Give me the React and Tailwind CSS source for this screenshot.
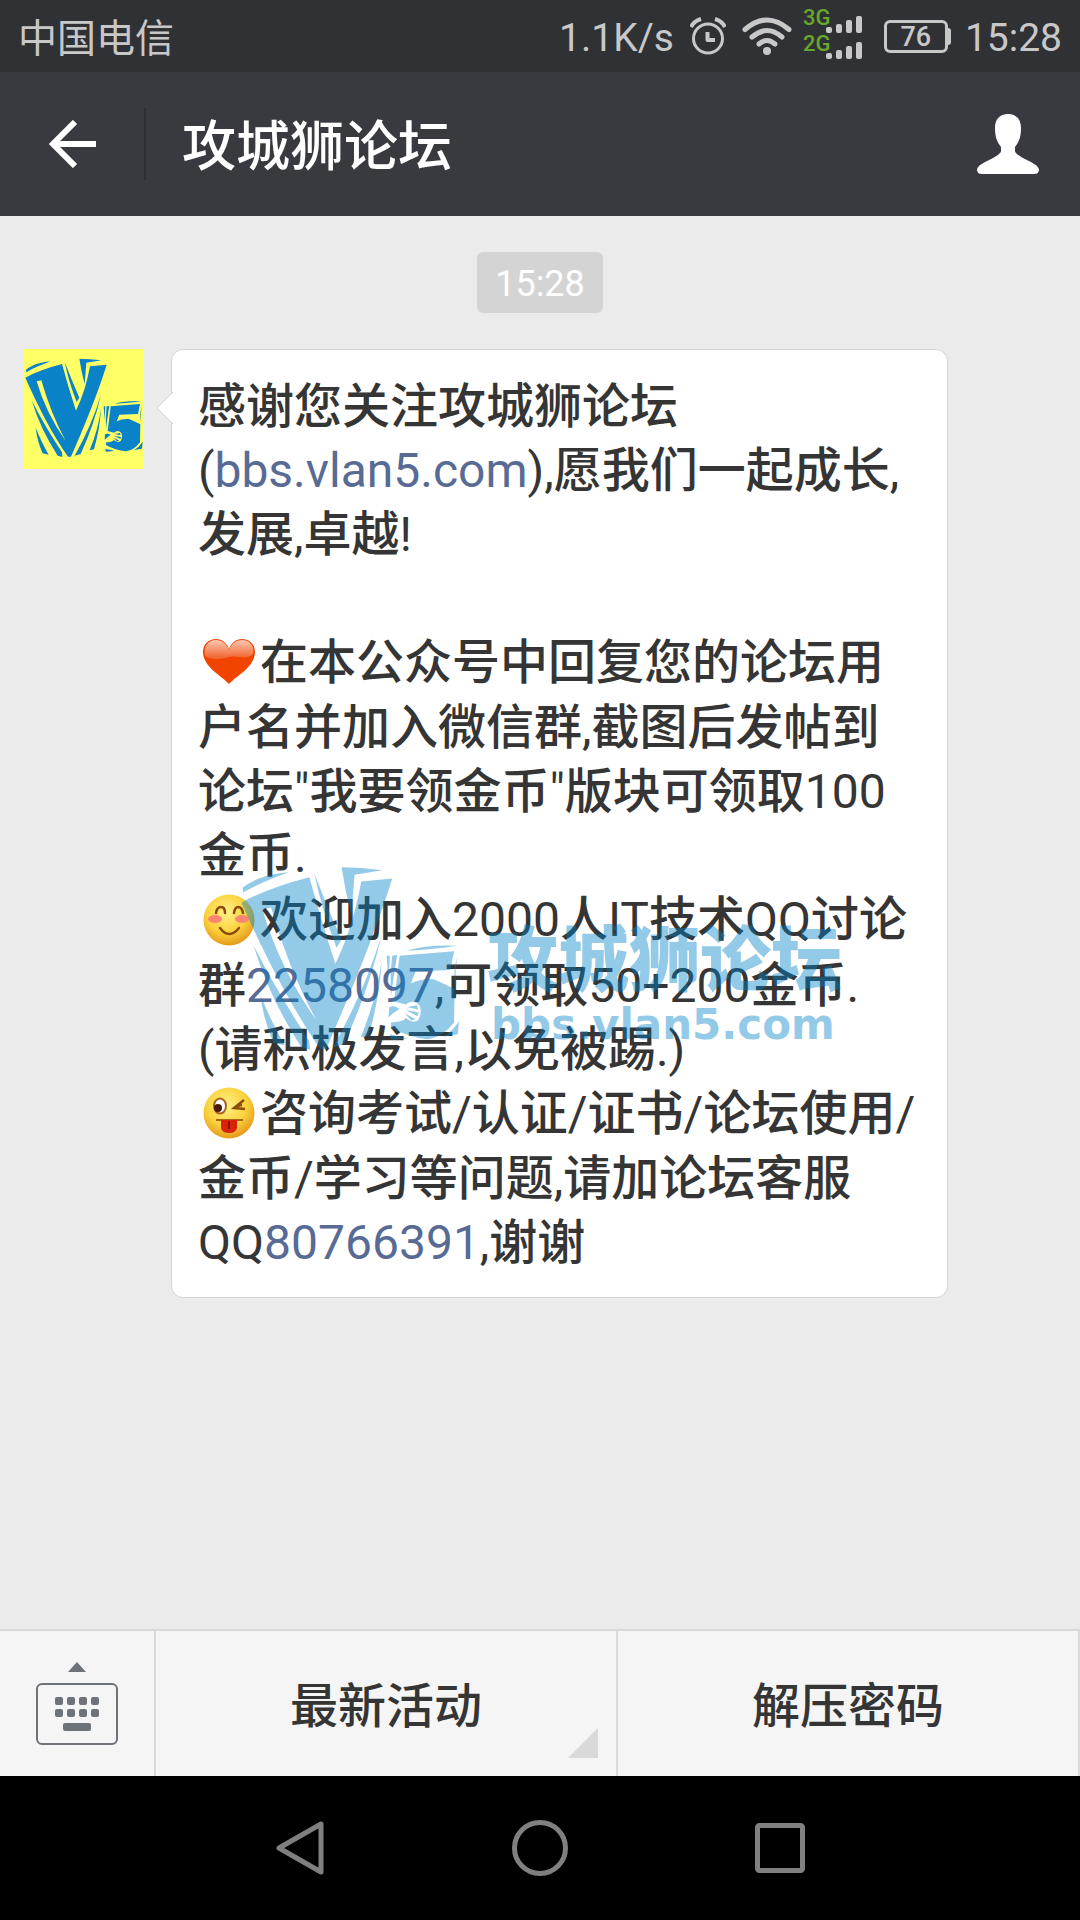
import React from 'react';

// The V5 mark, shared by the avatar and the watermark
const LogoShapes = () => (
    <g>
        <path d="M18 74 C40 58 62 52 92 49 C66 59 42 68 19 82 Z" />
        <path
            fillRule="evenodd"
            d="M16 98 Q60 74 126 57 Q146 130 168 197 Q196 140 210 64 L260 59 C232 150 190 250 153 335 L144 335 C98 270 52 180 16 98 Z M50 109 L64 106 Q92 205 137 288 Q78 205 50 109 Z"
        />
        <path d="M134 51 Q156 108 178 158 L170 171 Q146 110 134 51 Z" />
        <path d="M178 41 Q210 41 244 46 L199 53 L194 118 Q184 80 178 41 Z" />
        <path d="M36 168 Q72 240 126 322 L127 336 L113 332 Q60 250 36 168 Z" />
        <path d="M47 248 Q62 286 86 329 L68 325 Q52 290 47 248 Z" />
        <path d="M243 150 Q222 240 182 327 L164 332 Q214 244 243 150 Z" />
        <path d="M243 190 Q240 250 222 313 L209 316 Q236 250 243 190 Z" />
        <path d="M282 176 Q318 166 364 168 Q330 174 282 176 Z" />
        <path d="M251 184 L256 184 L254 226 Z M260 184 L268 183 Q262 220 258 250 Q256 220 260 184 Z" />
        <path
            d="M272 184 L360 177 Q357 192 354 207 L298 209 L290 229 Q308 220 327 222 Q346 230 361 238 L360 292 Q342 316 318 319 Q286 316 258 300 L258 292 Q276 292 282 285 Q294 295 302 288 Q309 276 304 264 Q294 253 282 263 L263 258 Z"
        />
        <path d="M284 267 L300 264 L302 271 Z M282 272 L303 276 L301 282 Z M280 277 L298 287 L291 289 Z" />
        <path d="M255 268 Q262 263 272 270 Q262 276 254 284 Z" />
        <path d="M366 186 Q360 206 364 232 Q356 208 366 186 Z M368 290 Q358 306 342 315 L366 311 Z M256 311 L284 318 L258 320 Z" />
    </g>
);

const AlarmIcon = () => (
    <svg viewBox="0 0 36 38" className="w-9 h-[38px]" fill="none" stroke="#c8c8c8" strokeWidth="3">
        <circle cx="18" cy="21.500" r="14.500" />
        <path d="M17.500 15 V23 H25" strokeWidth="4" strokeLinejoin="round" />
        <path d="M1 10 Q4 4 11 2 M35 10 Q32 4 25 2" strokeWidth="4" />
    </svg>
);

const WifiIcon = () => (
    <svg viewBox="0 0 50 38" className="w-[50px] h-[38px]" fill="none" stroke="#c8c8c8" strokeWidth="5" strokeLinecap="round">
        <path d="M3 12.500 Q25 -6.500 47 12.500" />
        <path d="M10 20 Q25 7 40 20" />
        <path d="M17 27 Q25 20 33 27" />
        <circle cx="25" cy="34" r="4" fill="#c8c8c8" stroke="none" />
    </svg>
);

const SignalIcon = () => (
    <svg viewBox="0 0 60 72" className="w-[60px] h-[72px]" fill="#c8c8c8">
        <g className="font-[Roboto] text-[22px] font-medium" fill="#67a82c">
            <text x="0" y="25">3G</text>
            <text x="0" y="51">2G</text>
        </g>
        {[33, 59].map(bottom => (
            <g key={bottom}>
                <rect x="23" y={bottom - 6} width="6" height="6" rx="2" />
                <rect x="33" y={bottom - 9} width="6" height="9" rx="2" />
                <rect x="43" y={bottom - 13} width="6" height="13" rx="2" />
                <rect x="53" y={bottom - 17} width="6" height="17" rx="2" />
            </g>
        ))}
    </svg>
);

const StatusBar = () => (
    <div className="h-[72px] bg-[#303135] flex items-center pl-[18px] pr-[18px] text-[#c8c8c8] text-[39px] leading-[48px]">
        <span className="mr-auto pt-1.5">中国电信</span>
        <span className="pt-1">1.1K/s</span>
        <div className="flex items-center gap-4 ml-4">
            <AlarmIcon />
            <WifiIcon />
        </div>
        <div className="ml-[11px]">
            <SignalIcon />
        </div>
        <div className="flex items-center ml-[21px] mr-3.5">
            <div className="w-16 h-[33px] border-3 border-[#c8c8c8] rounded-md flex items-center justify-center text-[27px] leading-7 font-medium pt-0.5">
                76
            </div>
            <div className="w-[3px] h-[17px] bg-[#c8c8c8] rounded-r-sm" />
        </div>
        <span className="pt-1">15:28</span>
    </div>
);

const Header = () => (
    <header className="h-36 bg-[#393a3f] flex items-center text-white">
        <button aria-label="返回" className="w-[146px] h-[72px] border-r-2 border-[#2e2f33] flex items-center justify-center">
            <svg viewBox="0 0 48 48" className="w-12 h-12" fill="none" stroke="white" strokeWidth="6">
                <path d="M49 24 H6 M27 2 L5 24 L27 46" />
            </svg>
        </button>
        <h1 className="ml-9 pt-2 text-[54px] leading-[72px] font-medium">攻城狮论坛</h1>
        <button aria-label="资料" className="ml-auto mr-[41px]">
            <svg viewBox="0 0 62 60" className="w-[62px] h-[60px]" fill="white">
                <path d="M31 0 C39 0 44 5 44 14 C44 23 42 28 38 33 V37 C38 39 42 42 48 45 C56 49 62 52 62 56 C61.500 59 60 60 57 60 H5 C2 60 .5 59 0 56 C0 52 6 49 14 45 C20 42 24 39 24 37 V33 C20 28 18 23 18 14 C18 5 23 0 31 0 Z" />
            </svg>
        </button>
    </header>
);

const emojiClass = 'inline-block align-middle w-[62px] h-[52px] px-1 mb-2';

const HeartEmoji = () => (
    <svg viewBox="0 0 54 52" className={emojiClass}>
        <defs>
            <linearGradient id="heartShine" x1="0" y1="0" x2="0" y2="1">
                <stop offset="0" stopColor="#fff" stopOpacity="0.7" />
                <stop offset="1" stopColor="#fff" stopOpacity="0.15" />
            </linearGradient>
        </defs>
        <path d="M27 48 C20 40 1 31 1 16 C1 8 7 3 14 3 C20 3 25 7 27 13 C29 7 34 3 40 3 C47 3 53 8 53 16 C53 31 34 40 27 48 Z" fill="#f04400" />
        <path d="M3 20 C1 9 7 4 14 4 C20 4 25 8 27 14 C29 8 34 4 40 4 C47 4 53 9 51 18 C44 25 38 19 27 21 C18 24 8 24 3 20 Z" fill="url(#heartShine)" />
    </svg>
);

const FaceBase = () => (
    <>
        <defs>
            <radialGradient id="face" cx="0.45" cy="0.35" r="0.65">
                <stop offset="0" stopColor="#fff08a" />
                <stop offset="0.6" stopColor="#fbd33c" />
                <stop offset="1" stopColor="#e59a1c" />
            </radialGradient>
        </defs>
        <circle cx="27" cy="26" r="25.500" fill="url(#face)" />
    </>
);

const SmileEmoji = () => (
    <svg viewBox="0 0 54 52" className={emojiClass}>
        <FaceBase />
        <ellipse cx="13" cy="25" rx="7" ry="4" fill="#fb8570" />
        <ellipse cx="40" cy="25" rx="7" ry="4" fill="#fb8570" />
        <g fill="none" stroke="#8a4a08" strokeWidth="2.500" strokeLinecap="round">
            <path d="M14 19 Q15 13 19 13 Q23 13 23 19" />
            <path d="M32 19 Q33 13 36 13 Q40 13 41 19" />
            <path d="M18 34 Q27 46 37 34" />
        </g>
    </svg>
);

const WinkEmoji = () => (
    <svg viewBox="0 0 54 52" className={emojiClass}>
        <FaceBase />
        <ellipse cx="18" cy="19" rx="6" ry="7.500" fill="#fff" stroke="#a8641a" strokeWidth="2" />
        <circle cx="16" cy="21" r="4" fill="#4a1a08" />
        <path d="M42 13 L32 21 L43 22 M35 19 L40 18" fill="none" stroke="#8a4a08" strokeWidth="2.500" />
        <path d="M14 33 H41" stroke="#a8641a" strokeWidth="2" />
        <path d="M19 33 H35 V41 Q34 46 27 46 Q20 46 19 41 Z" fill="#d8220a" />
        <path d="M27 34 V42" stroke="#8c1004" strokeWidth="2" />
    </svg>
);

const Watermark = () => (
    <div className="absolute left-[70px] top-[517px] flex pointer-events-none text-[#0082c8] opacity-[0.42]">
        <svg viewBox="17 41 351 300" className="w-[217px] h-[186px]" fill="currentColor">
            <LogoShapes />
        </svg>
        <div className="ml-7 mt-[54px] whitespace-nowrap">
            <div className="text-[71px] leading-[80px] font-black">攻城狮论坛</div>
            <div className="font-['DejaVu_Sans'] text-[42px] leading-[48px] font-bold pl-1">bbs.vlan5.com</div>
        </div>
    </div>
);

const Link = ({ href, children }) => (
    <a href={href} className="text-[#576b95]">{children}</a>
);

const Message = () => (
    <div className="flex items-start pl-6 pr-33">
        <svg viewBox="12 12 360 360" className="w-[120px] h-[120px] shrink-0 bg-[#ffff66]" fill="#0a82c8" role="img" aria-label="V5">
            <LogoShapes />
        </svg>
        <div className="relative flex-1 ml-[27px] bg-white border border-[#d4d4d4] rounded-xl pl-[26px] pt-[25px] pb-[22px]">
            <svg viewBox="0 0 17 32" className="absolute -left-4 top-[42px] w-[17px] h-8">
                <path d="M17 0 L1 16 L17 32" fill="white" stroke="#d4d4d4" />
            </svg>
            <div className="font-[Roboto,'Noto_Sans_CJK_SC_Medium','Noto_Sans_CJK_SC',sans-serif] text-[48px] leading-[64px] text-[#353535] whitespace-nowrap">
                <p>
                    感谢您关注攻城狮论坛<br />
                    (<Link href="#bbs">bbs.vlan5.com</Link>),愿我们一起成长,<br />
                    发展,卓越!<br />
                    <br />
                </p>
                <p>
                    <HeartEmoji />在本公众号中回复您的论坛用<br />
                    户名并加入微信群,截图后发帖到<br />
                    论坛"我要领金币"版块可领取100<br />
                    金币.
                </p>
                <p>
                    <SmileEmoji />欢迎加入2000人IT技术QQ讨论<br />
                    群<Link href="#group">2258097</Link>,可领取50+200金币.<br />
                    (请积极发言,以免被踢.)
                </p>
                <p>
                    <WinkEmoji />咨询考试/认证/证书/论坛使用/<br />
                    金币/学习等问题,请加论坛客服<br />
                    QQ<Link href="#service">80766391</Link>,谢谢
                </p>
            </div>
            <Watermark />
        </div>
    </div>
);

const MenuBar = () => (
    <div className="h-[147px] bg-[#f5f5f5] border-t-2 border-[#d9d9d9] flex text-[48px] leading-[64px] font-medium text-[#353535]">
        <button aria-label="键盘" className="w-[156px] border-r-2 border-[#d9d9d9] flex items-center justify-center">
            <svg viewBox="0 0 82 86" className="w-[82px] h-[86px]" fill="#6e7279">
                <path d="M32 11 L41 1 L50 11 Z" />
                <rect x="1" y="23" width="80" height="60" rx="5" fill="none" stroke="#6e7279" strokeWidth="2" />
                {[19, 31, 43, 55].map(x => (
                    <g key={x}>
                        <rect x={x} y="36" width="8" height="8" rx="2" />
                        <rect x={x} y="48" width="8" height="8" rx="2" />
                    </g>
                ))}
                <rect x="27" y="62" width="28" height="8" rx="2" />
            </svg>
        </button>
        <button className="relative flex-1 pt-1.5 border-r-2 border-[#d9d9d9]">
            最新活动
            <svg viewBox="0 0 30 30" className="absolute right-[18px] bottom-[18px] w-[30px] h-[30px]" fill="#d9d9d9">
                <path d="M30 0 V30 H0 Z" />
            </svg>
        </button>
        <button className="flex-1 pt-1.5 border-r-2 border-[#d9d9d9]">解压密码</button>
    </div>
);

const NavBar = () => (
    <nav className="h-36 bg-black flex items-center justify-center gap-[187px]">
        <button aria-label="后退">
            <svg viewBox="0 0 50 56" className="w-[50px] h-14" fill="none" stroke="#808080" strokeWidth="5" strokeLinejoin="round">
                <path d="M46 4 V52 L4 28 Z" />
            </svg>
        </button>
        <button aria-label="主页">
            <svg viewBox="0 0 56 56" className="w-14 h-14" fill="none" stroke="#808080" strokeWidth="5">
                <circle cx="28" cy="28" r="25.500" />
            </svg>
        </button>
        <button aria-label="最近任务">
            <svg viewBox="0 0 50 50" className="w-[50px] h-[50px]" fill="none" stroke="#808080" strokeWidth="5">
                <rect x="2.500" y="2.500" width="45" height="45" rx="2" />
            </svg>
        </button>
    </nav>
);

const App = () => {
    return (
        <div className="min-h-screen flex flex-col bg-[#ebebeb] font-[Roboto,'Noto_Sans_CJK_SC',sans-serif]">
            <StatusBar />
            <Header />
            <main className="flex-1 pt-9 flex flex-col gap-9">
                <time className="self-center px-[18px] h-[61px] rounded-md bg-[#d4d4d4] text-white text-[36px] leading-[64px]">15:28</time>
                <Message />
            </main>
            <MenuBar />
            <NavBar />
        </div>
    );
};

export default App;
